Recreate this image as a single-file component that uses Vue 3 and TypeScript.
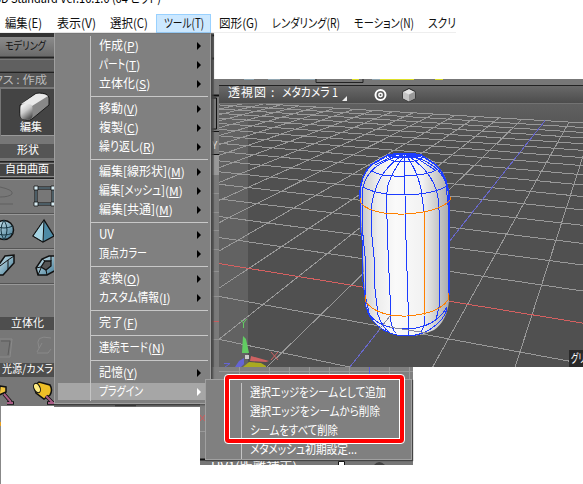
<script setup lang="ts">
interface Entry { t: string; k?: string; w: number; sub?: boolean; on?: boolean }

const bar: (Entry & { x: number })[] = [
  { t: '編集', k: '(E)', w: 37, x: 5 },
  { t: '表示', k: '(V)', w: 39, x: 15 },
  { t: '選択', k: '(C)', w: 38, x: 14 },
  { t: 'ツール', k: '(T)', w: 40, x: 8, on: true },
  { t: '図形', k: '(G)', w: 39, x: 8 },
  { t: 'レンダリング', k: '(R)', w: 68, x: 14 },
  { t: 'モーション', k: '(N)', w: 60, x: 14 },
]

const groups: Entry[][] = [
  [{ t: '作成', k: 'P', w: 24, sub: true }, { t: 'パート', k: 'T', w: 26, sub: true }, { t: '立体化', k: 'S', w: 36, sub: true }],
  [{ t: '移動', k: 'V', w: 24, sub: true }, { t: '複製', k: 'C', w: 24, sub: true }, { t: '繰り返し', k: 'R', w: 40, sub: true }],
  [{ t: '編集[線形状]', k: 'M', w: 68, sub: true }, { t: '編集[メッシュ]', k: 'M', w: 66, sub: true }, { t: '編集[共通]', k: 'M', w: 56, sub: true }],
  [{ t: 'UV', w: 15, sub: true }, { t: '頂点カラー', w: 48, sub: true }],
  [{ t: '変換', k: 'O', w: 24, sub: true }, { t: 'カスタム情報', k: 'I', w: 60, sub: true }],
  [{ t: '完了', k: 'F', w: 24 }],
  [{ t: '連続モード', k: 'N', w: 49 }],
  [{ t: '記憶', k: 'Y', w: 24, sub: true }, { t: 'プラグイン', w: 44, sub: true, on: true }],
]

const plugins: Entry[] = [
  { t: '選択エッジをシームとして追加', w: 136 },
  { t: '選択エッジをシームから削除', w: 130 },
  { t: 'シームをすべて削除', w: 88 },
  { t: 'メタメッシュ初期設定...', w: 107 },
]

/* Ground plane: projective map fixed by four known grid crossings. */
type Pair = [number, number, number, number]
const anchors: Pair[] = [
  [-2, -2, 219, 339.3],
  [-4, 1, 237.7, 240.3],
  [2, 0, 532, 314.8],
  [2, 3, 556, 240.2],
]
function solve(ps: Pair[]): number[] {
  const m: number[][] = []
  for (const [i, j, x, y] of ps) {
    m.push([i, j, 1, 0, 0, 0, -i * x, -j * x, x])
    m.push([0, 0, 0, i, j, 1, -i * y, -j * y, y])
  }
  for (let c = 0; c < 8; c++) {
    let p = c
    for (let r = c + 1; r < 8; r++) if (Math.abs(m[r][c]) > Math.abs(m[p][c])) p = r
    const tmp = m[c]; m[c] = m[p]; m[p] = tmp
    for (let r = 0; r < 8; r++) {
      if (r === c) continue
      const f = m[r][c] / m[c][c]
      for (let k = c; k < 9; k++) m[r][k] -= f * m[c][k]
    }
  }
  return m.map((row, n) => row[8] / row[n])
}
const h = solve(anchors)
function at(i: number, j: number): string {
  const w = h[6] * i + h[7] * j + 1
  return `${((h[0] * i + h[1] * j + h[2]) / w).toFixed(1)} ${((h[3] * i + h[4] * j + h[5]) / w).toFixed(1)}`
}
const far = 16
const lines: string[] = []
for (let i = -20; i <= 12; i++) if (i !== 0) lines.push(`M${at(i, -3)}L${at(i, far)}`)
for (let j = -3; j <= far; j++) if (j !== 0) lines.push(`M${at(-20, j)}L${at(12, j)}`)
const gridPath = lines.join('')
const redAxis = `M${at(-20, 0)}L${at(12, 0)}`
const blueAxis = `M${at(0, -3)}L${at(0, far)}`
</script>

<template>
  <div class="screen">
    <div class="title"><svg width="170" height="14"><text x="-5" y="3" textLength="166" lengthAdjust="spacingAndGlyphs">3D Standard Ver.16.1.0 (64 ビット)</text></svg></div>
    <div class="menubar">
      <div v-for="b in bar" :key="b.t" class="top" :class="{ open: b.on }">
        <svg :width="b.w + b.x" height="18"><text :x="b.x" y="14" :textLength="b.w" lengthAdjust="spacingAndGlyphs">{{ b.t + b.k }}</text></svg>
      </div>
      <svg class="cut" width="42" height="18"><text x="14" y="14" textLength="46" lengthAdjust="spacingAndGlyphs">スクリプト</text></svg>
    </div>

    <div class="work">
      <aside class="side">
        <svg width="54" height="373" viewBox="0 33 54 373">
          <defs>
            <linearGradient id="tab" x2="0" y2="1"><stop stop-color="#8c8c8c" /><stop offset="1" stop-color="#6a6a6a" /></linearGradient>
            <linearGradient id="cyl" x2=".6" y2="1"><stop stop-color="#fff" /><stop offset=".5" stop-color="#ccc" /><stop offset="1" stop-color="#555" /></linearGradient>
            <linearGradient id="ice" x2="1" y2="1"><stop stop-color="#d5edf5" /><stop offset="1" stop-color="#3d7590" /></linearGradient>
          </defs>
          <rect y="33" width="54" height="373" fill="#777" />
          <rect y="33" width="54" height="4" fill="#333" />
          <rect y="37" width="54" height="19" fill="url(#tab)" />
          <path d="M0 57.500H54M0 72.500H54" stroke="#222" stroke-width="2" />
          <rect y="60" width="54" height="11" fill="#606060" />
          <rect y="73" width="54" height="14" fill="#555" />
          <rect x="1" y="89" width="53" height="46" fill="#444" /><path d="M1 135.500H54" stroke="#999" />
          <path d="M20 105 35 94Q38 92 46 94Q49 96 49 98V105L32 119Q28 122 21 118Q19 116 20 105Z" fill="#888" stroke="#1a1a1a" />
          <path d="M21 104 36 94Q43 93 48 96L32 106Q26 103 21 104Z" fill="#e9e9e9" />
          <rect x="20.500" y="104" width="12" height="15.500" rx="4" fill="url(#cyl)" />
          <rect x="0" y="144" width="54" height="14" fill="#555" />
          <rect y="161" width="54" height="17" fill="#444" /><path d="M0 161.500H54M0 178.500H54" stroke="#222" />
          <path d="M0 163.500H54M0 176.500H54" stroke="#888" />
          <path d="M0 179.500H54M0 214.500H54M0 249.500H54M0 284.500H54" stroke="#999" />
          <path d="M0 213.500H54M0 248.500H54M0 283.500H54" stroke="#555" />
          <path d="M0 187Q14 190 12 194Q9 197 0 197M0 204H13" stroke="#606060" fill="none" />
          <path d="M36 188H53V204H36Z" fill="none" stroke="#111" stroke-width="3" /><path d="M36 188H53V204H36Z" fill="none" stroke="#8ab" />
          <path d="M34 186h4v4h-4zM51 186h4v4h-4zM34 202h4v4h-4zM51 202h4v4h-4z" fill="#d9eef5" stroke="#111" stroke-width=".8" />
          <circle cx="4" cy="230" r="9.500" fill="url(#ice)" stroke="#111" stroke-width="1.500" />
          <path d="M-5 226Q4 230 13 226M-5 233Q4 237 13 233M4 220Q10 230 4 240M4 220Q-2 230 4 240" stroke="#183642" fill="none" />
          <path d="M44 220 33 236 43 242 54 236Z" fill="#4d8ba6" stroke="#111" stroke-width="1.300" /><path d="M44 220 33 236 43 242Z" fill="#a5d3e2" stroke="#111" />
          <path d="M-2 266 5 256 14 255V263L3 275-2 275Z" fill="url(#ice)" stroke="#111" stroke-width="1.500" /><path d="M0 266 8 260 14 256M8 260V269" stroke="#111" fill="none" />
          <path d="M36 268 42 259 49 256H56V270L47 275H38Z" fill="url(#ice)" stroke="#111" stroke-width="1.500" />
          <path d="M41 267 45 261H51V266L46 270Z" fill="#555" stroke="#111" stroke-width="1.300" /><path d="M36 268 41 267M42 259 45 261M38 275 41 268M47 275 46 270M51 256V261" stroke="#111" />
          <rect y="317" width="54" height="13" fill="#4e4e4e" />
          <path d="M0 339H12L10 357H0M39 348Q34 334 51 338M37 353H48L51 349M42 343L37 352" stroke="#8a8a8a" fill="none" /><path d="M1 341H10L8 355" stroke="#5c5c5c" fill="none" />
          <rect y="363" width="54" height="14" fill="#4e4e4e" />
          <path d="M0 386 6 387 6 392-1 395Z" fill="#f4c840" stroke="#111" stroke-width="1.500" /><path d="M4 394 11 402M7 403H14" stroke="#111" stroke-width="3.500" /><path d="M4 394 11 402M7 403H13" stroke="#a85d86" stroke-width="2" />
          <path d="M34 386 39 382 50 385Q53 390 50 395L44 399 36 393Z" fill="#eebf27" stroke="#111" stroke-width="1.500" /><ellipse cx="37" cy="388" rx="3" ry="5" fill="#ffed82" stroke="#111" transform="rotate(-25 37 388)" />
          <path d="M46 396 53 403M47 403H55" stroke="#111" stroke-width="3.500" /><path d="M46 396 53 403M48 403H55" stroke="#a85d86" stroke-width="2" />
          <g class="sidetext">
            <text x="5" y="50" textLength="41" lengthAdjust="spacingAndGlyphs" fill="#111">モデリング</text>
            <text x="-8" y="84" textLength="55" lengthAdjust="spacingAndGlyphs" fill="#bbb">クス : 作成</text>
            <text x="20" y="131" textLength="22">編集</text>
            <text x="17" y="154" textLength="22">形状</text>
            <text x="5" y="173" textLength="44">自由曲面</text>
            <text x="11" y="327" textLength="33">立体化</text>
            <text x="2" y="373" textLength="51" lengthAdjust="spacingAndGlyphs">光源/カメラ</text>
          </g>
        </svg>
      </aside>
      <div class="gap">
        <svg width="165" height="373" viewBox="54 33 165 373">
          <rect x="54" y="33" width="165" height="373" fill="#7a7a7a" />
          <rect x="214" y="33" width="5" height="46" fill="#fff" />
          <path d="M211 35.500h3M211 58.500h3M211 95.500h8" stroke="#111" stroke-width="2" />
          <path d="M211 98H216.500V129H211M211 131.500H219M211 154.500H219" stroke="#111" fill="none" />
          <rect x="211" y="155" width="8" height="20" fill="#999" />
          <text x="212" y="149" font-size="10" fill="#ddd">Y</text>
          <path d="M211 193.500h8M211 212.500h8M211 230.500h8M211 249.500h8M211 271.500h8M211 296.500h8M211 339.500h8" stroke="#919191" />
          <path d="M211 321.500h8" stroke="#c65d5d" />
          <rect x="211" y="37" width="3" height="367" fill="#444" opacity=".4" />
        </svg>
      </div>
      <main class="stage">
        <div class="blank"></div>
        <svg class="view" width="364" height="288" viewBox="219 79 364 288">
          <defs>
            <linearGradient id="head" x2="0" y2="1"><stop stop-color="#696969" /><stop offset="1" stop-color="#4c4c4c" /></linearGradient>
            <linearGradient id="sky" x2="0" y2="1"><stop stop-color="#606060" /><stop offset="1" stop-color="#4f4f4f" /></linearGradient>
            <linearGradient id="body"><stop stop-color="#c5c5c5" /><stop offset=".2" stop-color="#ededed" /><stop offset=".4" stop-color="#fafafa" /><stop offset=".7" stop-color="#f2f2f2" /><stop offset="1" stop-color="#ababab" /></linearGradient>
            <clipPath id="floor"><rect x="219" y="104" width="364" height="263" /></clipPath>
          </defs>
          <rect x="219" y="79" width="364" height="288" fill="#505050" />
          <rect x="219" y="104" width="364" height="40" fill="url(#sky)" />
          <rect x="219" y="79" width="364" height="6" fill="#777" />
          <path d="M244 79.500h10M268 79.500h12M300 79.500h15M372 79.500h10" stroke="#91a6b1" /><path d="M352 79.500h7M380 79.500h34M435 79.500h8" stroke="#dddf28" />
          <path d="M316 79V82.500H363V79M219 85.500H583" stroke="#222" fill="none" />
          <rect x="219" y="86" width="364" height="17" fill="url(#head)" /><path d="M219 103.500H583" stroke="#727272" />
          <g clip-path="url(#floor)" fill="none" shape-rendering="crispEdges">
            <rect x="219" y="104" width="29" height="263" fill="#626262" />
            <path :d="gridPath" stroke="#999" />
            <path :d="redAxis" stroke="#d46060" />
            <path :d="blueAxis" stroke="#6868cc" />
          </g>
          <path d="M360 199Q359 176 373 163Q386 153 404 153Q423 153 435 163Q450 177 449 200V301Q447 321 434 330Q421 336 408 336Q389 336 378 326Q366 316 365 300Z" fill="url(#body)" />
          <g fill="none" stroke="#1c3cff" shape-rendering="crispEdges">
            <path d="M360 201V225L362 240V275L365 297V302Q367 317 378 326Q389 336 408 336Q423 335 432 328Q444 320 447 309" />
            <path d="M360 199Q359 177 371 165L388 155Q404 152 421 155L436 165Q449 179 449 200V295" stroke-width="1.600" />
            <path d="M388 156Q404 152 421 156Q405 159 388 156" stroke-width="2" />
            <path d="M386 157Q390 162 404 162Q418 162 423 157M372 171Q381 177 404 176Q428 175 436 170M363 187Q377 195 405 195Q434 194 447 186M366 307Q373 329 408 329Q436 327 447 307" />
            <path d="M404 154V176L405 195L406 240L408 302V336M404 156Q393 170 388 185Q385 200 387 219L388 250L390 295V317Q392 330 396 333M403 155Q374 173 371 211V226L374 257L375 289L378 315Q383 328 389 332" />
            <path d="M402 155Q368 164 363 187L362 206V225L365 256V295L370 317M406 155Q417 170 421 189L424 212M424 316 424 325 421 333M407 155Q427 168 434 184Q439 195 439 210V307L436 320M408 155Q440 163 446 184L448 205V289" />
            <path d="M375 165 397 154M412 155 435 170" />
          </g>
          <path d="M360 198V202Q370 215 405 214Q440 212 450 200V197M424 212V295L425 315M365 295V301Q377 317 407 316Q438 314 448 300V293" fill="none" stroke="#ff8000" shape-rendering="crispEdges" />
          <path d="M390 316 378 331M389 327 427 333" stroke="#8787a0" fill="none" shape-rendering="crispEdges" />
          <g class="headtext"><text x="228" y="97" textLength="38">透視図</text><text x="271" y="97">:</text><text x="282" y="97" textLength="56" lengthAdjust="spacingAndGlyphs">メタカメラ 1</text></g>
          <path d="M347 96V101H342Z" fill="#eee" />
          <circle cx="380.500" cy="95" r="5" fill="none" stroke="#fff" stroke-width="2" /><circle cx="380.500" cy="95" r="1.700" fill="none" stroke="#fff" stroke-width="1.500" />
          <path d="M409 88.500 415 91.500V98.500L409 101.500 403 98.500V91.500Z" fill="#e4e4e4" stroke="#222" /><path d="M409 94.500 415 91.500V98.500L409 101.500Z" fill="#999" /><path d="M409 94.500 403 91.500V98.500L409 101.500Z" fill="#c4c4c4" />
          <path d="M243 336 246 339 249 353 242 353Z" fill="#62cc62" /><path d="M241 320 243.500 323 246.500 319M243.500 323V328" fill="none" stroke="#62cc62" />
          <path d="M251 356 269 361 266 362 250 361Z" fill="#cf6262" /><path d="M271 352 278 360M278 352 271 360" stroke="#cf6262" />
          <path d="M244 358V364L241 367H235L239 361Z" fill="#6464d5" /><path d="M224 363.500H230L225 367" stroke="#6464d5" fill="none" />
          <path d="M249 362 261 363 266 366V367H243Z" fill="#aaaa20" /><rect x="245" y="355" width="4" height="4" fill="#ccc" />
          <rect x="569" y="350" width="14" height="17" fill="#292929" /><g class="headtext"><text x="571" y="363" textLength="14" lengthAdjust="spacingAndGlyphs">グリ</text></g>
        </svg>
      </main>
    </div>

    <svg class="lower" width="213" height="98" viewBox="200 367 213 98">
      <rect x="200" y="367" width="213" height="98" fill="#808080" />
      <path d="M219 371.500H413M200 431.500h6M239.500 367v12M269.500 367v12M289.500 367v12M309.500 367v12M329.500 367v12M349.500 367v12M389.500 367v12M409.500 367v12" stroke="#999" />
      <path d="M369.500 367v8" stroke="#5e5edc" /><path d="M200 415 205 421M205 415 200 421" stroke="#d35a5a" />
      <rect x="200" y="459" width="213" height="6" fill="#777" /><path d="M200 459.500H413" stroke="#111" stroke-width="2" />
      <g class="headtext"><text x="211" y="471" textLength="86" lengthAdjust="spacingAndGlyphs">UV1(距離補正)</text></g>
      <path d="M338.500 465V461.500H344.500V465" stroke="#111" fill="#fff" /><path d="M374 465Q379 459 385 465" fill="#444" />
    </svg>
    <svg class="edge" width="200" height="80" viewBox="0 404 200 80">
      <rect x="54" y="404" width="146" height="3" fill="#777" /><path d="M54 404.500H200M115 405.500h21" stroke="#333" stroke-width="1.500" />
      <path d="M0 406H1V484H0Z" fill="#888" /><path d="M.5 422V426" stroke="#e8a020" />
    </svg>

    <nav class="menu">
      <div class="inner">
        <div v-for="(g, n) in groups" :key="n" class="group">
          <div v-for="e in g" :key="e.t" class="item" :class="{ on: e.on }">
            <svg :width="e.w" height="19"><text x="0" y="14" :textLength="e.w" lengthAdjust="spacingAndGlyphs">{{ e.t }}</text></svg>
            <span v-if="e.k" class="key">(<u>{{ e.k }}</u>)</span>
            <i v-if="e.sub" class="arrow"></i>
          </div>
        </div>
      </div>
    </nav>

    <nav class="submenu">
      <div class="subinner">
        <div v-for="p in plugins" :key="p.t" class="subitem">
          <svg :width="p.w + 1" height="19"><text x="0" y="14" :textLength="p.w" lengthAdjust="spacingAndGlyphs">{{ p.t }}</text></svg>
        </div>
      </div>
    </nav>
    <div class="mark"></div>
  </div>
</template>

<style>
body { background: #fff; overflow: hidden; }
</style>

<style scoped>
.screen { position: relative; width: 583px; height: 484px; overflow: hidden; background: #fff; font-family: "Noto Sans CJK JP", sans-serif; font-size: 12.5px; font-feature-settings: "palt"; display: flex; flex-direction: column; }
svg { display: block; flex: none; }
.title { height: 14px; font-size: 12px; }
.menubar { height: 19px; width: 456px; display: flex; box-sizing: border-box; border-bottom: 1px solid #eee; color: #111; }
.menubar svg text { fill: #111; }
.top { height: 19px; flex: none; box-sizing: border-box; }
.top.open { margin-left: 8px; width: 55px; background: #cce8ff; border: 1px solid #99d1ff; }
.top.open svg { margin: -1px 0 0 -1px; }
.top svg, .item svg, .subitem svg { overflow: visible; }
.work { height: 373px; display: flex; }
.side { width: 54px; }
.gap { width: 165px; }
.blank { height: 46px; }
.sidetext { font-size: 11px; fill: #fff; }
.headtext { font-size: 12px; fill: #fff; }
.lower { position: absolute; left: 200px; top: 367px; }
.edge { position: absolute; left: 0; top: 404px; }
.menu { position: absolute; left: 54px; top: 33px; width: 157px; height: 371px; box-sizing: border-box; background: #808080; border: 1px solid #a0a0a0; border-top-color: #777; box-shadow: 2px 1px 2px #444; padding: 2px 2px; }
.inner { position: relative; }
.inner::before { content: ""; position: absolute; left: 33px; top: 0; width: 1px; height: 365px; background: #c4c4c4; z-index: 1; }
.group + .group { padding-top: 6px; background: linear-gradient(#c8c8c8, #c8c8c8) 34px 3px / 117px 1px no-repeat; }
.item { height: 19px; display: flex; align-items: center; padding-left: 42px; padding-right: 7px; color: #000; }
.item.on { background: linear-gradient(#a6a6a6, #a6a6a6) 1px 1px / 149px 17px no-repeat; color: #fff; }
.item text, .subitem text { fill: #fff; }
.key { color: #fff; font-size: 12px; line-height: 19px; white-space: nowrap; }
.key u { text-underline-offset: 1px; text-decoration-thickness: 1px; }
.arrow { margin-left: auto; width: 0; height: 0; border: 4px solid transparent; border-left: 4px solid currentColor; border-right: 0; }
.submenu { position: absolute; left: 205px; top: 379px; width: 207px; height: 81px; box-sizing: border-box; background: #808080; border: 1px solid #a0a0a0; box-shadow: 1px 1px 1px #444; padding-top: 3px; }
.subinner { margin-left: 35px; border-left: 1px solid #c4c4c4; padding-left: 8px; }
.subitem { height: 19px; }
.mark { position: absolute; left: 225px; top: 375px; width: 179px; height: 68px; box-sizing: border-box; border: 4px solid #f00; outline: 1px solid #fff; outline-offset: 0; border-radius: 3px; box-shadow: inset 0 0 0 1px #fff; }
</style>
